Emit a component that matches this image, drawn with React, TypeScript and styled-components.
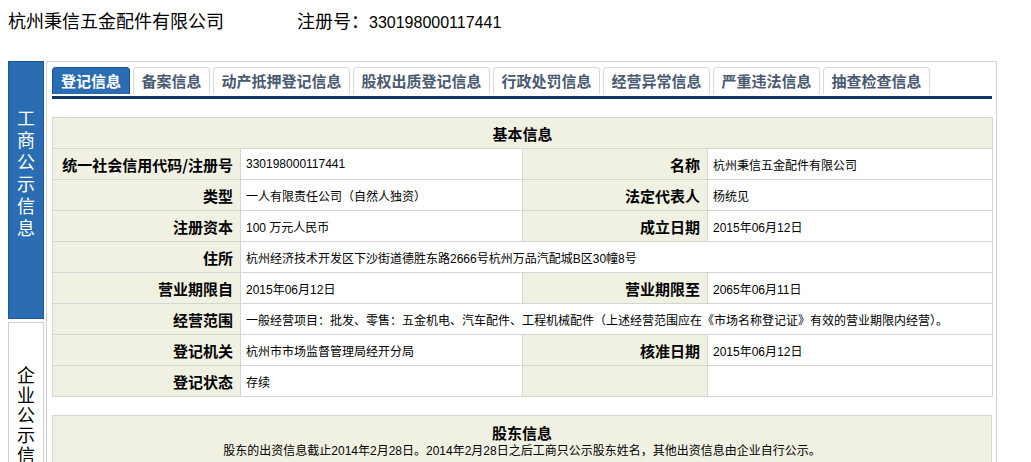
import React from 'react';
import styled, { createGlobalStyle } from 'styled-components';

const GlobalStyle = createGlobalStyle`
  body {
    margin: 8px;
    background: #fff;
    color: #000;
    font-family: "Liberation Sans", "Noto Sans CJK SC", sans-serif;
    overflow: hidden;
  }
`;

const Header = styled.div`
  display: flex;
  align-items: flex-start;
  height: 53px;
`;

const CompanyName = styled.h1`
  margin: 0;
  width: 289px;
  font-size: 18px;
  font-weight: normal;
  line-height: 28px;
`;

const RegNo = styled.div`
  font-size: 18px;
  line-height: 28px;

  span {
    font-size: 16px;
  }
`;

const PrintLink = styled.a`
  margin: -21px 31px 0 auto;
  color: #f00;
  font-size: 13px;
  line-height: 16px;
  text-decoration: underline;
  letter-spacing: 1px;
`;

const Layout = styled.div`
  display: flex;
  align-items: flex-start;
  gap: 2px;
`;

const Sidebar = styled.div`
  width: 36px;
  display: flex;
  flex-direction: column;
  gap: 3px;
`;

const SideBlock = styled.div<{ $active?: boolean }>`
  box-sizing: border-box;
  height: ${(p) => (p.$active ? '258px' : '200px')};
  padding-top: ${(p) => (p.$active ? '44px' : '41px')};
  background: ${(p) => (p.$active ? '#2a6db3' : '#fff')};
  border: 1px solid ${(p) => (p.$active ? '#1d579c' : '#cfcfcf')};
  color: ${(p) => (p.$active ? '#fff' : '#000')};
  font-family: "Noto Sans CJK SC", sans-serif;
  font-size: 18px;
  line-height: ${(p) => (p.$active ? '22px' : '20px')};
  text-align: center;
  word-break: break-all;
  padding-left: 8px;
  padding-right: 8px;
`;

const Panel = styled.div`
  box-sizing: border-box;
  width: 951px;
  border: 1px solid #d0d0d0;
  padding: 5px 4px 40px 5px;
`;

const Tabs = styled.div`
  display: flex;
  gap: 3px;
  padding-bottom: 2px;
  border-bottom: 3px solid #0e3767;
`;

const Tab = styled.div<{ $active?: boolean }>`
  box-sizing: border-box;
  height: 27px;
  padding: 0 ${(p) => (p.$active ? '8px' : '7.5px')};
  border: 1px solid ${(p) => (p.$active ? '#1c5398' : '#dadada')};
  border-bottom: none;
  border-radius: 4px 4px 0 0;
  background: ${(p) => (p.$active ? '#2b6db4' : '#fff')};
  color: ${(p) => (p.$active ? '#fff' : '#4a5a72')};
  font-family: "Noto Sans CJK SC", sans-serif;
  font-size: 15px;
  font-weight: bold;
  line-height: 26px;
  white-space: nowrap;
`;

const InfoTable = styled.table`
  width: 940px;
  margin-top: 18px;
  border-collapse: collapse;
  table-layout: fixed;
  font-size: 12px;
`;

const CaptionCell = styled.th`
  height: 30px;
  padding: 0;
  background: #f1f1e3;
  border: 1px solid #d5d5d5;
  font-family: "Noto Sans CJK SC", sans-serif;
  font-size: 15px;
  font-weight: bold;
  text-align: center;
`;

const LabelCell = styled.th`
  height: 30px;
  padding: 0 7px 0 0;
  background: #f1f1e3;
  border: 1px solid #d5d5d5;
  font-family: "Noto Sans CJK SC", sans-serif;
  font-size: 15px;
  font-weight: bold;
  text-align: right;
  white-space: nowrap;
`;

const ValueCell = styled.td`
  padding: 0 0 0 5px;
  background: #fff;
  border: 1px solid #d5d5d5;
  white-space: nowrap;
`;

const Shareholders = styled.div`
  margin-top: 18px;
  padding: 7px 0 30px;
  background: #f1f1e3;
  border: 1px solid #d5d5d5;
  text-align: center;
`;

const SectionTitle = styled.div`
  font-family: "Noto Sans CJK SC", sans-serif;
  font-size: 15px;
  font-weight: bold;
  line-height: 20px;
`;

const SectionNote = styled.div`
  font-size: 12px;
  line-height: 16px;
`;

const tabs = ['登记信息', '备案信息', '动产抵押登记信息', '股权出质登记信息', '行政处罚信息', '经营异常信息', '严重违法信息', '抽查检查信息'];

type Row = [string, string, string?, string?];

const rows: Row[] = [
  ['统一社会信用代码/注册号', '330198000117441', '名称', '杭州秉信五金配件有限公司'],
  ['类型', '一人有限责任公司（自然人独资）', '法定代表人', '杨统见'],
  ['注册资本', '100 万元人民币', '成立日期', '2015年06月12日'],
  ['住所', '杭州经济技术开发区下沙街道德胜东路2666号杭州万品汽配城B区30幢8号'],
  ['营业期限自', '2015年06月12日', '营业期限至', '2065年06月11日'],
  ['经营范围', '一般经营项目：批发、零售：五金机电、汽车配件、工程机械配件（上述经营范围应在《市场名称登记证》有效的营业期限内经营）。'],
  ['登记机关', '杭州市市场监督管理局经开分局', '核准日期', '2015年06月12日'],
  ['登记状态', '存续', '', ''],
];

export default function App() {
  return (
    <>
      <GlobalStyle />
      <Header>
        <CompanyName>杭州秉信五金配件有限公司</CompanyName>
        <RegNo>注册号：<span>330198000117441</span></RegNo>
        <PrintLink href="#">打印信息</PrintLink>
      </Header>
      <Layout>
        <Sidebar>
          <SideBlock $active>工商公示信息</SideBlock>
          <SideBlock>企业公示信息</SideBlock>
        </Sidebar>
        <Panel>
          <Tabs>
            {tabs.map((t, i) => (
              <Tab key={t} $active={i === 0}>{t}</Tab>
            ))}
          </Tabs>
          <InfoTable>
            <colgroup>
              <col style={{ width: 188 }} />
              <col style={{ width: 282 }} />
              <col style={{ width: 185 }} />
              <col style={{ width: 285 }} />
            </colgroup>
            <tbody>
              <tr>
                <CaptionCell colSpan={4}>基本信息</CaptionCell>
              </tr>
              {rows.map(([label, value, label2, value2]) => (
                <tr key={label}>
                  <LabelCell>{label}</LabelCell>
                  {label2 === undefined ? (
                    <ValueCell colSpan={3}>{value}</ValueCell>
                  ) : (
                    <>
                      <ValueCell>{value}</ValueCell>
                      <LabelCell>{label2}</LabelCell>
                      <ValueCell>{value2}</ValueCell>
                    </>
                  )}
                </tr>
              ))}
            </tbody>
          </InfoTable>
          <Shareholders>
            <SectionTitle>股东信息</SectionTitle>
            <SectionNote>股东的出资信息截止2014年2月28日。2014年2月28日之后工商只公示股东姓名，其他出资信息由企业自行公示。</SectionNote>
          </Shareholders>
        </Panel>
      </Layout>
    </>
  );
}
